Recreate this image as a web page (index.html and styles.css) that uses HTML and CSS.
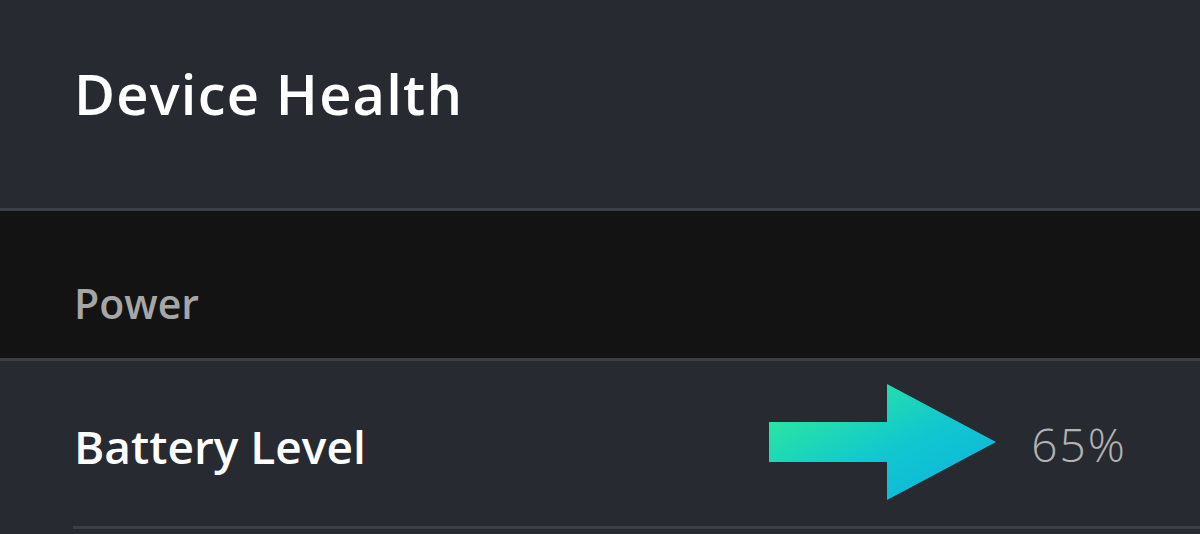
FILE: index.html
```html
<!DOCTYPE html>
<html lang="en">
<head>
<meta charset="utf-8">
<title>Device Health</title>
<link rel="stylesheet" href="styles.css">
</head>
<body>
  <header class="page-header">
    <h1 class="page-title">Device Health</h1>
  </header>
  <section class="section">
    <div class="section-head">
      <h2 class="section-title">Power</h2>
    </div>
    <div class="row">
      <span class="row-label">Battery Level</span>
      <svg class="pointer" width="227" height="116" viewBox="0 0 227 116" aria-hidden="true">
        <defs>
          <linearGradient id="arrowGrad" x1="0" y1="0" x2="1" y2="1">
            <stop offset="0" stop-color="#33f28f"/>
            <stop offset="0.55" stop-color="#12c7cf"/>
            <stop offset="1" stop-color="#0ab2e0"/>
          </linearGradient>
        </defs>
        <path d="M0 38 H118 V0 L227 58 L118 116 V78 H0 Z" fill="url(#arrowGrad)"/>
      </svg>
      <span class="row-value">65%</span>
    </div>
  </section>
</body>
</html>
```

FILE: styles.css
```css
* {
  box-sizing: border-box;
}

html, body {
  margin: 0;
  padding: 0;
}

body {
  background: #272a30;
  font-family: "Open Sans", "Noto Sans", sans-serif;
  color: #ffffff;
  width: 1200px;
  height: 534px;
  overflow: hidden;
}

.page-header {
  height: 211px;
  padding: 65px 74px 0;
  border-bottom: 3px solid #3d3f44;
}

.page-title {
  margin: 0;
  font-size: 56px;
  line-height: 1;
  font-weight: 600;
  letter-spacing: 1.2px;
}

.section-head {
  height: 150px;
  background: #131313;
  padding: 72px 74px 0;
  border-bottom: 3px solid #3d3f44;
}

.section-title {
  margin: 0;
  font-size: 41px;
  line-height: 1;
  font-weight: 600;
  color: #a6a6a6;
}

.row {
  margin-left: 73px;
  height: 168px;
  padding: 0 75px 0 1px;
  display: flex;
  align-items: center;
  border-bottom: 3px solid #3d3f44;
}

.row-label {
  font-size: 46px;
  line-height: 1;
  font-weight: 600;
  padding-top: 4px;
}

.pointer {
  margin-left: auto;
  margin-right: 35px;
  margin-bottom: 4px;
  flex: none;
}

.row-value {
  font-size: 46px;
  line-height: 1;
  font-weight: 300;
  letter-spacing: 2px;
  margin-right: -2px;
  color: #b3b3b3;
}
```
